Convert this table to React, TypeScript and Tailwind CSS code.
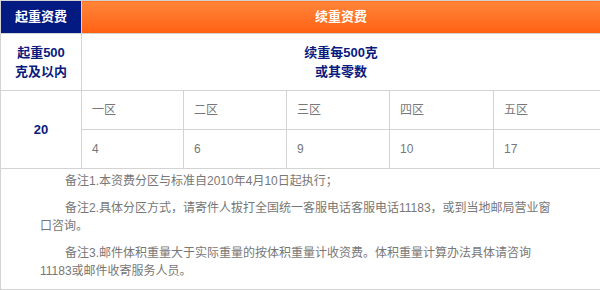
import React from "react";

const zones = [
  { name: "一区", price: "4" },
  { name: "二区", price: "6" },
  { name: "三区", price: "9" },
  { name: "四区", price: "10" },
  { name: "五区", price: "17" },
];

const notes = [
  "备注1.本资费分区与标准自2010年4月10日起执行；",
  "备注2.具体分区方式，请寄件人拔打全国统一客服电话客服电话11183，或到当地邮局营业窗口咨询。",
  "备注3.邮件体积重量大于实际重量的按体积重量计收资费。体积重量计算办法具体请咨询11183或邮件收寄服务人员。",
];

const font = "font-['Liberation_Sans','Noto_Sans_CJK_SC',sans-serif]";

export default function App() {
  return (
    <div className={`w-[600px] h-[290px] bg-white ${font} text-[12px]`}>
      <table className="w-[600px] table-fixed border-collapse border border-[#d3d3d3]">
        <colgroup>
          <col className="w-[81px]" />
          <col className="w-[102px]" />
          <col className="w-[103px]" />
          <col className="w-[103px]" />
          <col className="w-[104px]" />
          <col className="w-[107px]" />
        </colgroup>
        <tbody>
          {/* Header */}
          <tr className="h-[33px]">
            <td className="border border-[#d3d3d3] bg-[#031a82] text-center text-[13px] font-bold text-white">
              起重资费
            </td>
            <td
              colSpan={5}
              className="border border-[#d3d3d3] bg-gradient-to-b from-[#ff8538] to-[#ff600f] text-center text-[13px] font-bold text-white"
            >
              续重资费
            </td>
          </tr>

          <tr className="h-[57px]">
            <td className="border border-[#d3d3d3] text-center text-[13px] font-bold leading-[19px] text-[#0a1a7d]">
              起重500
              <br />
              克及以内
            </td>
            <td
              colSpan={5}
              className="border border-[#d3d3d3] text-center text-[13px] font-bold leading-[19px] text-[#0a1a7d]"
            >
              续重每500克
              <br />
              或其零数
            </td>
          </tr>

          <tr className="h-[39px]">
            <td
              rowSpan={2}
              className="border border-[#d3d3d3] text-center text-[13px] font-bold text-[#0a1a7d]"
            >
              20
            </td>
            {zones.map((z) => (
              <td key={z.name} className="border border-[#d3d3d3] pl-[10px] text-[#777]">
                {z.name}
              </td>
            ))}
          </tr>
          <tr className="h-[39px]">
            {zones.map((z) => (
              <td key={z.name} className="border border-[#d3d3d3] pl-[10px] text-[#777]">
                {z.price}
              </td>
            ))}
          </tr>

          {/* Notes */}
          <tr>
            <td colSpan={6} className="border border-[#d3d3d3] pl-[39px] pr-[40px] pt-[3px] align-top text-[#777]">
              {notes.map((n) => (
                <p key={n} className="mb-[9px] indent-[25px] leading-[18px]">
                  {n}
                </p>
              ))}
            </td>
          </tr>
        </tbody>
      </table>
    </div>
  );
}
